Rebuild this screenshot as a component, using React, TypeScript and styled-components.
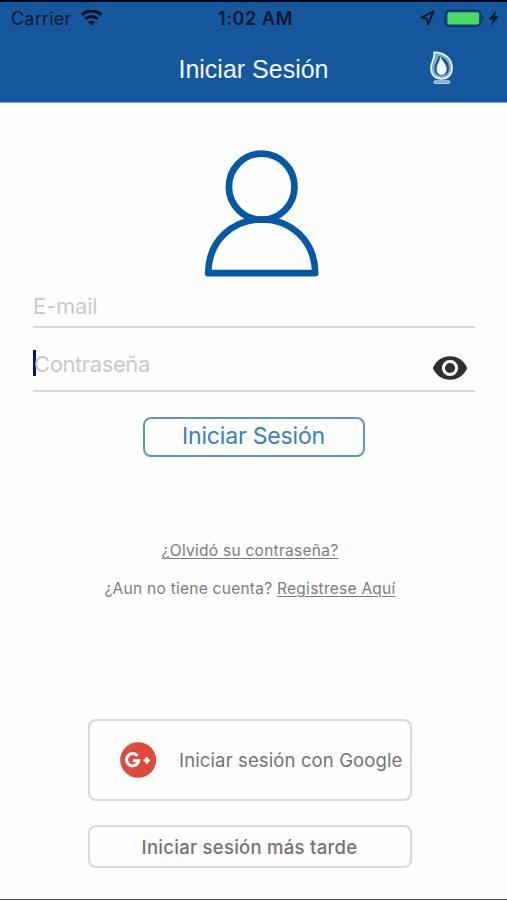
import React from 'react';
import styled, { createGlobalStyle } from 'styled-components';

const GlobalStyle = createGlobalStyle`
  * { box-sizing: border-box; }
  body { margin: 0; background: #fff; }
`;

const Screen = styled.div`
  width: 507px;
  height: 900px;
  display: flex;
  flex-direction: column;
  overflow: hidden;
  background: #fefefe;
  border-top: 2px solid #02051c;
  border-bottom: 1px solid #48484a;
  font-family: Inter, 'Liberation Sans', sans-serif;
`;

const Header = styled.header`
  flex: none;
  height: 101px;
  background: #15589e;
  border-bottom: 1px solid #7fa6cd;
`;

const StatusBar = styled.div`
  height: 33px;
  display: grid;
  grid-template-columns: 1fr auto 1fr;
  align-items: center;
  padding: 0 7px 0 11px;
  color: #07152b;
`;

const StatusGroup = styled.div<{ $end?: boolean }>`
  display: flex;
  align-items: center;
  gap: 9px;
  justify-content: ${(p) => (p.$end ? 'flex-end' : 'flex-start')};
  svg { display: block; }
`;

const Label = styled.span<{ $size: number; $weight?: number; $spacing?: number }>`
  font-size: ${(p) => p.$size}px;
  font-weight: ${(p) => p.$weight ?? 400};
  letter-spacing: ${(p) => p.$spacing ?? 0}px;
  line-height: 1.2;
  white-space: nowrap;
`;

const TitleBar = styled.div`
  height: 67px;
  display: grid;
  grid-template-columns: 1fr auto 1fr;
  align-items: center;
`;

const Title = styled.h1`
  grid-column: 2;
  margin: 0;
  font: 400 25px/30px 'Liberation Sans', Arial, sans-serif;
  color: #f4f8fc;
  white-space: nowrap;
`;

const FlameSlot = styled.div`
  margin-left: 99px;
  height: 36px;
  svg { display: block; }
`;

const Form = styled.main`
  display: flex;
  flex-direction: column;
  align-items: center;
`;

const Avatar = styled.div`
  height: 129px;
  margin: 46px 0 0 16px;
  svg { display: block; }
`;

const Field = styled.div<{ $height: number; $top: number }>`
  width: 442px;
  margin-left: 1px;
  height: ${(p) => p.$height}px;
  padding-top: ${(p) => p.$top}px;
  border-bottom: 2px solid #d9d9d9;
  display: flex;
  align-items: flex-start;
  color: #c9c9cb;
`;

const Caret = styled.i`
  width: 3px;
  height: 26px;
  margin: -1px -2px 0 0;
  background: #0b0b86;
`;

const EyeButton = styled.button`
  margin: 4px 7px 0 auto;
  padding: 0;
  border: 0;
  background: none;
  svg { display: block; }
`;

const OutlineButton = styled.button<{ $w: number; $h: number; $mt: number; $tone: string; $line: string; $pad?: string; $mr?: number }>`
  width: ${(p) => p.$w}px;
  height: ${(p) => p.$h}px;
  margin-top: ${(p) => p.$mt}px;
  margin-right: ${(p) => p.$mr ?? 0}px;
  padding: ${(p) => p.$pad ?? '0'};
  display: flex;
  align-items: center;
  justify-content: ${(p) => (p.$pad ? 'space-between' : 'center')};
  border: 2px solid ${(p) => p.$line};
  border-radius: 8px;
  background: #fefefe;
  color: ${(p) => p.$tone};
  font-family: inherit;
`;

const Links = styled.div`
  margin-top: 85px;
  margin-right: 7px;
  display: flex;
  flex-direction: column;
  align-items: center;
  gap: 19px;
  color: #7b7b7b;
`;

const Link = styled.a`
  text-decoration: underline;
  text-decoration-thickness: 1px;
  text-underline-offset: 2px;
`;

export default function App() {
  return (
    <>
      <GlobalStyle />
      <Screen>
        <Header>
          <StatusBar>
            <StatusGroup>
              <Label $size={18} $spacing={0.2}>Carrier</Label>
              <svg width="23" height="17" viewBox="0 0 23 17">
                <g fill="none" stroke="#06101f" strokeWidth="3">
                  <path d="M1.700 4.800C7.200-.4 15.800-.4 21.300 4.800" />
                  <path d="M5.200 9c3.600-3.300 9-3.300 12.600 0" />
                </g>
                <path fill="#06101f" d="M11.500 15.500L8 11.900c1.900-1.600 5.100-1.600 7 0z" />
              </svg>
            </StatusGroup>
            <Label $size={18} $weight={600} $spacing={0.6}>1:02 AM</Label>
            <StatusGroup $end>
              <svg width="80" height="20" viewBox="0 0 80 20">
                <path d="M13.600 2.700L1.400 8.300l5.300 1.300 1.300 5.800z" fill="none" stroke="#07152b" strokeWidth="1.900" strokeLinejoin="round" />
                <rect x="25.300" y="1.300" width="35.400" height="15.900" rx="4.300" fill="#124780" stroke="#0d376b" strokeWidth="1.700" />
                <rect x="27.400" y="3.200" width="31.800" height="12.300" rx="2.200" fill="#4cd965" />
                <path d="M62.500 6.500c2.200.7 2.200 4.500 0 5.200z" fill="#0d376b" />
                <path d="M76.500 1.200l-8 9.200h4.200l-2 6.500 8-9.700h-4.300z" fill="#07152b" />
              </svg>
            </StatusGroup>
          </StatusBar>
          <TitleBar>
            <Title>Iniciar Sesión</Title>
            <FlameSlot>
              <svg width="28" height="36" viewBox="0 0 28 36">
                <path d="M6.200 1.300C7.300 7.800 3 10.500 3 17c0 6.600 4.200 10.800 10.500 10.800S24 23.600 24 17C24 8.500 17.500 1.300 6.200 1.300z" fill="#7fa6cf" stroke="#edf5fc" strokeWidth="1.700" />
                <path d="M9.500 4.300C10.300 10 5.700 11.800 5.700 17.300c0 4.900 3.100 7.800 7.900 7.800s7.900-2.900 7.900-7.800C21.500 10.500 16.500 5.300 9.500 4.300z" fill="#15589e" stroke="#c4d8ec" strokeWidth=".6" />
                <path d="M11.800 5.300c.8 5-3.200 7.700-3.200 12.800 0 3.600 1.900 5.800 5 5.800s5-2.200 5-5.800c0-4.700-3.900-7.800-6.800-12.800z" fill="#edf5fc" />
                <rect x="5.900" y="29.800" width="16" height="2.700" rx="1.200" fill="#7da7d2" stroke="#d9e8f6" strokeWidth=".8" />
              </svg>
            </FlameSlot>
          </TitleBar>
        </Header>
        <Form>
          <Avatar>
            <svg width="116" height="129" viewBox="0 0 116 129">
              <g fill="none" stroke="#0458a5" strokeWidth="6.700" strokeLinejoin="round">
                <ellipse cx="57.700" cy="37.700" rx="32.800" ry="33" />
                <path d="M4.200 124.200C4.500 91 29.200 70.500 57.700 70.500S111 91 111.200 124.200z" />
              </g>
            </svg>
          </Avatar>
          <Field $height={50} $top={15}>
            <Label $size={22} $spacing={-0.2}>E-mail</Label>
          </Field>
          <Field $height={64} $top={23}>
            <Caret />
            <Label $size={22} $spacing={-0.4}>Contraseña</Label>
            <EyeButton aria-label="Mostrar contraseña">
              <svg width="36" height="26" viewBox="0 0 36 26">
                <path d="M.8 13C4 5.600 10.400 1.200 18 1.200S32 5.600 35.200 13C32 20.400 25.600 24.800 18 24.800S4 20.400.8 13z" fill="#303030" />
                <circle cx="18" cy="13" r="6.600" fill="#303030" stroke="#fff" strokeWidth="3" />
              </svg>
            </EyeButton>
          </Field>
          <OutlineButton $w={222} $h={40} $mt={25} $tone="#397fb8" $line="#5b98c6">
            <Label $size={23} $spacing={-0.18}>Iniciar Sesión</Label>
          </OutlineButton>
          <Links>
            <Label $size={15.5} $spacing={0.27}><Link>¿Olvidó su contraseña?</Link></Label>
            <Label $size={15.5} $spacing={0.26}>¿Aun no tiene cuenta? <Link>Registrese Aquí</Link></Label>
          </Links>
          <OutlineButton $w={324} $h={82} $mt={121} $mr={8} $tone="#737373" $line="#d9d9d9" $pad="0 7px 0 30px">
            <svg width="38" height="38" viewBox="0 0 38 38">
              <ellipse cx="18.200" cy="19" rx="18" ry="17.800" fill="#dc4b3e" />
              <path d="M17.400 14.800A6.100 6.100 0 1 0 18.700 19.700h-5.800" fill="none" stroke="#fff" strokeWidth="3" />
              <path d="M26.800 16.300v6.400M23.600 19.500H30" stroke="#fff" strokeWidth="2.500" />
            </svg>
            <Label $size={18.5} $spacing={0.12}>Iniciar sesión con Google</Label>
          </OutlineButton>
          <OutlineButton $w={324} $h={43} $mt={24} $mr={8} $tone="#737373" $line="#d9d9d9">
            <Label $size={18.5} $weight={500} $spacing={0.27}>Iniciar sesión más tarde</Label>
          </OutlineButton>
        </Form>
      </Screen>
    </>
  );
}
